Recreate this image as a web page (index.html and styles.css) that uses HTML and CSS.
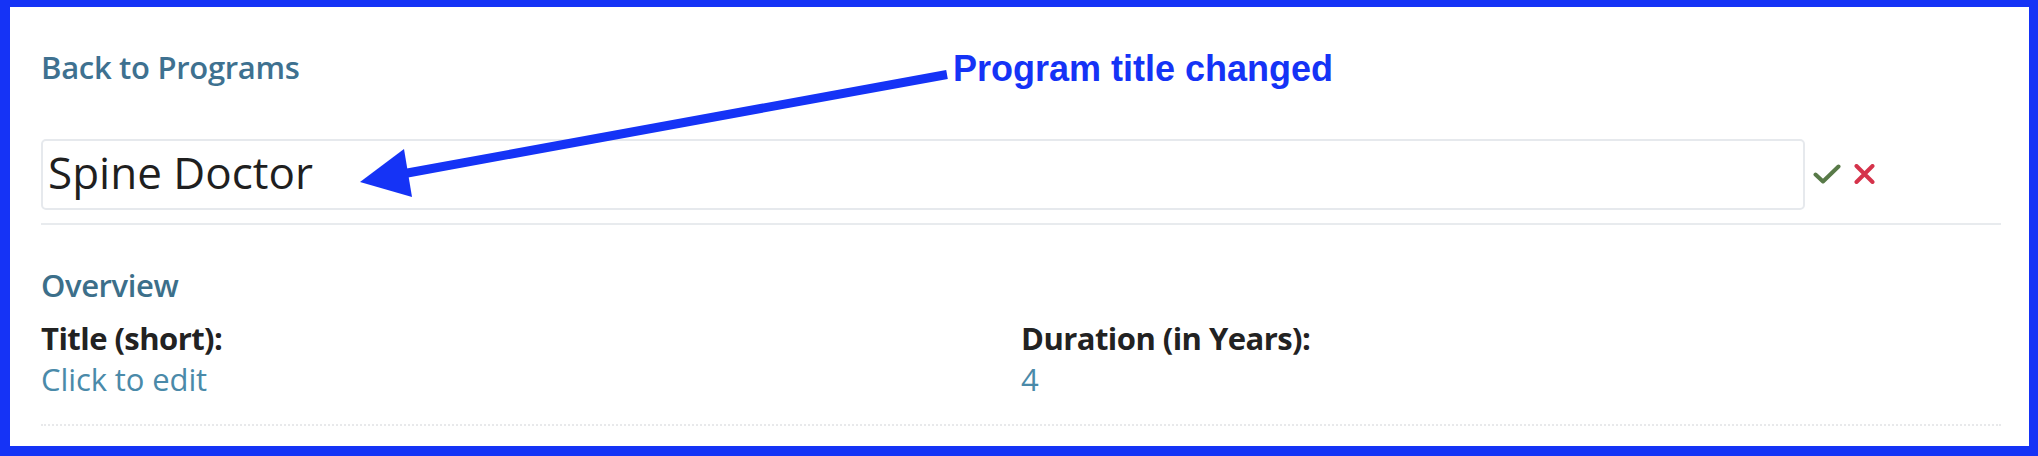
FILE: index.html
```html
<!DOCTYPE html>
<html lang="en">
<head>
<meta charset="utf-8">
<title>Program</title>
<link rel="stylesheet" href="styles.css">
</head>
<body>
<div class="frame">
  <div class="page">
    <a class="back" href="#">Back to Programs</a>
    <div class="title-row">
      <div class="title-input">Spine Doctor</div>
      <div class="actions">
        <svg class="ok" width="28" height="20" viewBox="0 0 28 20"><path d="M2.5 10.5 L10 17.5 L25.5 2.5" fill="none" stroke="#587a48" stroke-width="4" stroke-linecap="round" stroke-linejoin="round"/></svg>
        <svg class="cancel" width="21" height="20" viewBox="0 0 21 20"><path d="M2.5 2 L18.5 18 M18.5 2 L2.5 18" fill="none" stroke="#d5334b" stroke-width="4" stroke-linecap="round"/></svg>
      </div>
    </div>
    <div class="divider"></div>
    <h2 class="section">Overview</h2>
    <div class="fields">
      <div class="field">
        <div class="label">Title (short):</div>
        <a class="value" href="#">Click to edit</a>
      </div>
      <div class="field">
        <div class="label">Duration (in Years):</div>
        <a class="value" href="#">4</a>
      </div>
    </div>
  </div>
</div>
<div class="note">Program title changed</div>
<svg class="arrow" width="2038" height="456" viewBox="0 0 2038 456">
  <line x1="947" y1="74.5" x2="402" y2="174" stroke="#1533f6" stroke-width="9"/>
  <polygon points="360,182 404,149 412,197" fill="#1533f6"/>
</svg>
</body>
</html>
```

FILE: styles.css
```css
html, body {
  margin: 0;
  padding: 0;
  background: #ffffff;
}
body {
  position: relative;
  width: 2038px;
  height: 456px;
  overflow: hidden;
  font-family: "Open Sans", "Noto Sans", sans-serif;
}
.frame {
  box-sizing: border-box;
  width: 2038px;
  height: 456px;
  border-style: solid;
  border-color: #1533f6;
  border-width: 7px 9px 10px 10px;
  background: #ffffff;
}
.page {
  padding: 40px 28px 0 31px;
  display: flex;
  flex-direction: column;
}
.back {
  display: block;
  font-size: 31px;
  font-weight: 600;
  line-height: 40px;
  color: #3e7190;
  text-decoration: none;
  letter-spacing: -0.3px;
}
.title-row {
  margin-top: 52px;
  display: flex;
  align-items: center;
}
.title-input {
  box-sizing: border-box;
  width: 90%;
  height: 71px;
  border: 2px solid #e6e9ed;
  border-radius: 5px;
  padding: 0 0 4px 5px;
  font-size: 44px;
  line-height: 63px;
  color: #1f1f1f;
}
.actions {
  display: flex;
  align-items: center;
  gap: 13px;
  margin-left: 8px;
  margin-top: -2px;
}
.actions svg {
  display: block;
}
.divider {
  margin-top: 13px;
  height: 2px;
  background: #e8ebee;
}
.section {
  margin: 40px 0 0 0;
  font-size: 31px;
  font-weight: 600;
  line-height: 40px;
  color: #3c6f8a;
  letter-spacing: -0.4px;
}
.fields {
  margin-top: 13px;
  display: grid;
  grid-template-columns: 1fr 1fr;
  padding-bottom: 24px;
  border-bottom: 2px dotted #e8e9eb;
}
.field {
  display: flex;
  flex-direction: column;
}
.label {
  font-size: 31px;
  font-weight: 700;
  line-height: 41px;
  color: #222222;
  letter-spacing: -0.55px;
}
.value {
  font-size: 31px;
  font-weight: 400;
  line-height: 41px;
  color: #4a8aa9;
  text-decoration: none;
  letter-spacing: -0.1px;
}
.note {
  position: absolute;
  left: 953px;
  top: 51px;
  font-family: "Liberation Sans", Arial, sans-serif;
  font-weight: 700;
  font-size: 36px;
  line-height: 36px;
  color: #1533f6;
  white-space: nowrap;
}
.arrow {
  position: absolute;
  left: 0;
  top: 0;
  pointer-events: none;
}
```
